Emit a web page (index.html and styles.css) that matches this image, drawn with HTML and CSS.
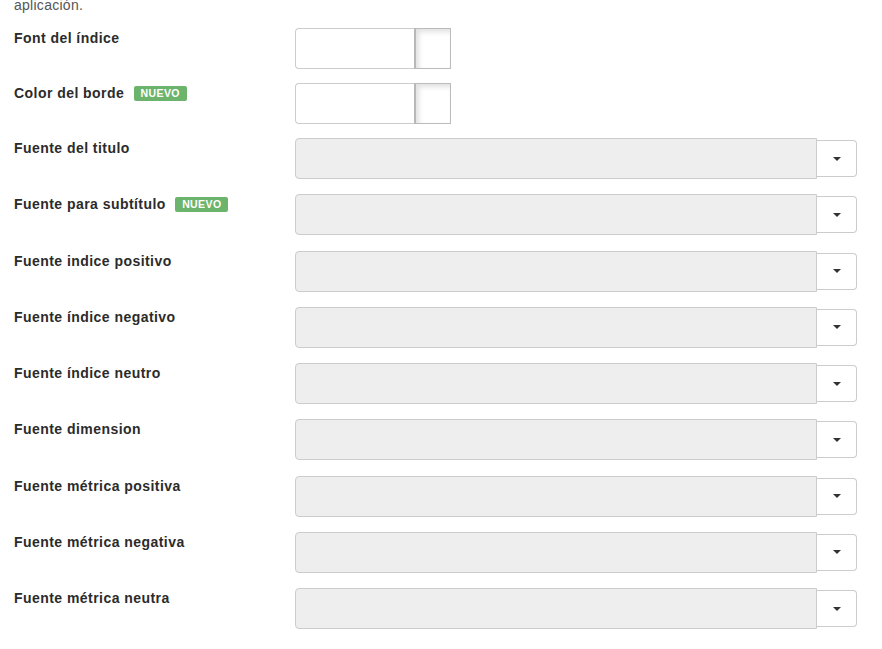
FILE: index.html
```html
<!DOCTYPE html>
<html lang="es">

<head>
    <meta charset="UTF-8">
    <meta name="viewport" content="width=device-width, initial-scale=1.0">
    <title>Opciones de estilo</title>
    <link rel="stylesheet" href="styles.css">
</head>

<body>
    <div class="container">
        <p class="help">aplicación.</p>

        <form class="settings">
            <div class="form-row">
                <label>Font del índice</label>
                <div class="color-group">
                    <input type="text" class="color-input">
                    <span class="color-addon"></span>
                </div>
            </div>

            <div class="form-row">
                <label>Color del borde <span class="badge">NUEVO</span></label>
                <div class="color-group">
                    <input type="text" class="color-input">
                    <span class="color-addon"></span>
                </div>
            </div>

            <div class="form-row">
                <label>Fuente del titulo</label>
                <div class="font-select">
                    <div class="font-box"></div>
                    <button type="button" class="font-btn"><span class="caret"></span></button>
                </div>
            </div>

            <div class="form-row">
                <label>Fuente para subtítulo <span class="badge">NUEVO</span></label>
                <div class="font-select">
                    <div class="font-box"></div>
                    <button type="button" class="font-btn"><span class="caret"></span></button>
                </div>
            </div>

            <div class="form-row">
                <label>Fuente indice positivo</label>
                <div class="font-select">
                    <div class="font-box"></div>
                    <button type="button" class="font-btn"><span class="caret"></span></button>
                </div>
            </div>

            <div class="form-row">
                <label>Fuente índice negativo</label>
                <div class="font-select">
                    <div class="font-box"></div>
                    <button type="button" class="font-btn"><span class="caret"></span></button>
                </div>
            </div>

            <div class="form-row">
                <label>Fuente índice neutro</label>
                <div class="font-select">
                    <div class="font-box"></div>
                    <button type="button" class="font-btn"><span class="caret"></span></button>
                </div>
            </div>

            <div class="form-row">
                <label>Fuente dimension</label>
                <div class="font-select">
                    <div class="font-box"></div>
                    <button type="button" class="font-btn"><span class="caret"></span></button>
                </div>
            </div>

            <div class="form-row">
                <label>Fuente métrica positiva</label>
                <div class="font-select">
                    <div class="font-box"></div>
                    <button type="button" class="font-btn"><span class="caret"></span></button>
                </div>
            </div>

            <div class="form-row">
                <label>Fuente métrica negativa</label>
                <div class="font-select">
                    <div class="font-box"></div>
                    <button type="button" class="font-btn"><span class="caret"></span></button>
                </div>
            </div>

            <div class="form-row">
                <label>Fuente métrica neutra</label>
                <div class="font-select">
                    <div class="font-box"></div>
                    <button type="button" class="font-btn"><span class="caret"></span></button>
                </div>
            </div>
        </form>
    </div>
</body>

</html>
```

FILE: styles.css
```css
body {
    margin: 0;
    font-family: "Liberation Sans", Arial, sans-serif;
    font-size: 14px;
    line-height: 20px;
    color: #333;
    background: #fff;
}

.container {
    padding: 0 14px;
}

.help {
    margin: -5px 0 13px;
    color: #555;
    letter-spacing: 0.27px;
}

.settings {
    display: flex;
    flex-direction: column;
    gap: 14px;
}

.form-row {
    display: flex;
    align-items: flex-start;
    height: 42.25px;
}

.form-row:nth-child(-n+2) {
    height: 41px;
}

.form-row label {
    width: 281px;
    flex-shrink: 0;
    font-weight: bold;
    line-height: 20px;
    letter-spacing: 0.45px;
    color: #2b2b2b;
}

.badge {
    display: inline-block;
    margin-left: 5px;
    padding: 0 7px;
    background: #6cb46c;
    color: #fff;
    font-size: 10.5px;
    line-height: 15px;
    letter-spacing: 0.4px;
    border-radius: 2px;
    vertical-align: 1px;
}

/* colour picker: text field with swatch addon */
.color-group {
    display: flex;
    height: 41px;
}

.color-input {
    width: 119px;
    height: 41px;
    box-sizing: border-box;
    margin: 0;
    border: 1px solid #ccc;
    border-right: 0;
    border-radius: 4px 0 0 4px;
    background: #fff;
}

.color-addon {
    width: 37px;
    height: 41px;
    box-sizing: border-box;
    border: 1px solid #bbb;
    border-left: 2px solid #b8b8b8;
    background: #fff;
    box-shadow: inset 3px 3px 5px rgba(0, 0, 0, 0.12);
}

/* font picker: disabled box with dropdown button */
.font-select {
    display: flex;
    align-items: center;
    height: 41px;
}

.font-box {
    width: 522px;
    height: 41px;
    box-sizing: border-box;
    border: 1px solid #ccc;
    border-radius: 4px 0 0 4px;
    background: #eee;
}

.font-btn {
    width: 40px;
    height: 37px;
    margin: 0;
    padding: 0;
    border: 1px solid #ccc;
    border-left: 0;
    border-radius: 0 4px 4px 0;
    background: #fff;
    display: flex;
    align-items: center;
    justify-content: center;
}

.caret {
    width: 0;
    height: 0;
    border-top: 4px solid #333;
    border-left: 4px solid transparent;
    border-right: 4px solid transparent;
}
```
